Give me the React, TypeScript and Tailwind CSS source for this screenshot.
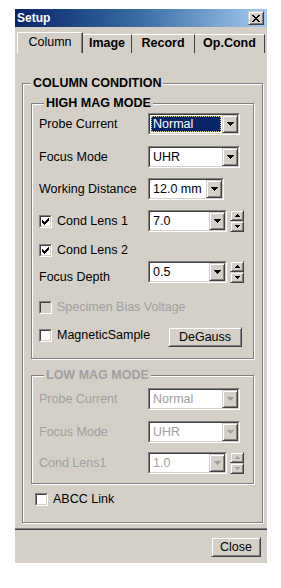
import React from "react";

const CHECK = [
  "......#",
  ".....##",
  "#...###",
  "##.###.",
  "#####..",
  ".###...",
  "..#....",
];

const checkPath = CHECK.flatMap((row, y) =>
  row.split("").map((c, x) => (c === "#" ? `M${x} ${y}h1v1h-1z` : ""))
).join("");

const Check = ({ checked, disabled }: { checked?: boolean; disabled?: boolean }) => (
  <div className="w-[13px] h-[13px] shrink-0 border border-t-[#808080] border-l-[#808080] border-b-white border-r-white">
    <div
      className={`w-full h-full flex items-center justify-center border border-t-[#404040] border-l-[#404040] border-b-[#d4d0c8] border-r-[#d4d0c8] ${
        disabled ? "bg-[#d4d0c8]" : "bg-white"
      }`}
    >
      {checked && (
        <svg width="7" height="7" viewBox="0 0 7 7" shapeRendering="crispEdges">
          <path d={checkPath} fill="#000" />
        </svg>
      )}
    </div>
  </div>
);

const Arrow = ({ up, small, color = "#000" }: { up?: boolean; small?: boolean; color?: string }) => {
  const w = small ? 5 : 7;
  const h = small ? 3 : 4;
  const rows = [];
  for (let i = 0; i < h; i++) {
    const y = up ? h - 1 - i : i;
    rows.push(<rect key={i} x={i} y={y} width={w - 2 * i} height={1} />);
  }
  return (
    <svg width={w} height={h} viewBox={`0 0 ${w} ${h}`} shapeRendering="crispEdges" fill={color}>
      {rows}
    </svg>
  );
};

const raised =
  "border border-t-[#d4d0c8] border-l-[#d4d0c8] border-b-[#404040] border-r-[#404040] shadow-[inset_1px_1px_0_#fff,inset_-1px_-1px_0_#808080] bg-[#d4d0c8]";

const Combo = ({
  value,
  w,
  focused,
  disabled,
}: {
  value: string;
  w: string;
  focused?: boolean;
  disabled?: boolean;
}) => (
  <div className={`${w} h-[22px] shrink-0 border border-t-[#808080] border-l-[#808080] border-b-white border-r-white`}>
    <div className="w-full h-full flex bg-white border border-t-[#404040] border-l-[#404040] border-b-[#d4d0c8] border-r-[#d4d0c8]">
      {focused ? (
        <div className="flex-1 m-[1px] flex items-center bg-[#0a246a] text-white border border-dotted border-[#e0d890] pl-[1px] leading-none">
          {value}
        </div>
      ) : (
        <div className={`flex-1 flex items-center pl-[3px] leading-none ${disabled ? "text-[#a0a0a0]" : ""}`}>
          {value}
        </div>
      )}
      <div className={`w-[16px] h-full flex items-center justify-center ${raised}`}>
        <Arrow color={disabled ? "#a0a0a0" : "#000"} />
      </div>
    </div>
  </div>
);

const Spin = ({ disabled }: { disabled?: boolean }) => (
  <div className="w-[14px] h-[22px] ml-[3px] flex flex-col shrink-0">
    <div className={`h-[11px] flex items-center justify-center ${raised}`}>
      <Arrow up small color={disabled ? "#a0a0a0" : "#000"} />
    </div>
    <div className={`h-[11px] flex items-center justify-center ${raised}`}>
      <Arrow small color={disabled ? "#a0a0a0" : "#000"} />
    </div>
  </div>
);

const groupBox =
  "border border-[#808080] shadow-[inset_1px_1px_0_#fff,1px_1px_0_#fff]";

const Legend = ({ children, ml, disabled }: { children: React.ReactNode; ml: string; disabled?: boolean }) => (
  <div
    className={`-mt-[9px] ${ml} w-fit px-[2px] h-[16px] leading-[16px] bg-[#d4d0c8] font-bold text-[12.5px] ${
      disabled ? "text-[#a0a0a0]" : "text-black"
    }`}
  >
    {children}
  </div>
);

const tabs = [
  { label: "Image", w: "w-[49px]" },
  { label: "Record", w: "w-[63px]" },
  { label: "Op.Cond", w: "w-[70px]" },
];

export default function App() {
  return (
    <div className="w-[281px] h-[588px] bg-white pt-[9px] pl-[15px] font-['Liberation_Sans',Arial,sans-serif] text-[12.5px] text-black">
      <div className="w-[252px] h-[554px] bg-[#d4d0c8] flex flex-col">
        {/* title bar */}
        <div className="h-[18px] flex items-center justify-between bg-linear-to-r from-[#0a246a] via-[#3a6ea5] to-[#a6caf0] pl-[2px] pr-[3px]">
          <span className="text-white font-bold text-[12px] leading-none">Setup</span>
          <div className={`w-[16px] h-[14px] flex items-center justify-center ${raised}`}>
            <svg width="8" height="7" viewBox="0 0 8 7" shapeRendering="crispEdges">
              <path
                d="M0 0h2v1h-2zM6 0h2v1h-2zM1 1h2v1h-2zM5 1h2v1h-2zM2 2h4v1h-4zM3 3h2v1h-2zM2 4h4v1h-4zM1 5h2v1h-2zM5 5h2v1h-2zM0 6h2v1h-2zM6 6h2v1h-2z"
                fill="#000"
              />
            </svg>
          </div>
        </div>

        {/* tabs */}
        <div className="h-[26px] flex items-end pl-[2px]">
          <div className="w-[66px] h-[21px] flex items-center justify-center border-t border-l border-t-white border-l-white border-r border-r-[#404040] shadow-[inset_-1px_0_0_#808080] pb-[1px]">
            Column
          </div>
          {tabs.map((t) => (
            <div
              key={t.label}
              className={`${t.w} h-[19px] flex items-center justify-center font-bold border-t border-t-white border-r border-r-[#404040] pb-[2px]`}
            >
              {t.label}
            </div>
          ))}
        </div>

        {/* panel */}
        <div className="pl-[7px] pr-[4px]">
          <div className={`mt-[30px] w-[241px] ${groupBox} pb-[13px]`}>
            <Legend ml="ml-[8px]">COLUMN CONDITION</Legend>

            {/* high mag */}
            <div className={`mt-[12px] mx-[8px] ${groupBox} pl-[7px] pb-[11px]`}>
              <Legend ml="ml-[5px]">HIGH MAG MODE</Legend>

              <div className="mt-[2px] h-[22px] flex items-center">
                <span className="w-[109px]">Probe Current</span>
                <Combo value="Normal" w="w-[92px]" focused />
              </div>
              <div className="mt-[11px] h-[22px] flex items-center">
                <span className="w-[109px]">Focus Mode</span>
                <Combo value="UHR" w="w-[92px]" />
              </div>
              <div className="mt-[10px] h-[22px] flex items-center">
                <span className="w-[109px]">Working Distance</span>
                <Combo value="12.0 mm" w="w-[76px]" />
              </div>
              <div className="mt-[10px] h-[22px] flex items-center">
                <div className="w-[109px] flex items-center gap-[5px]">
                  <Check checked />
                  <span>Cond Lens 1</span>
                </div>
                <Combo value="7.0" w="w-[79px]" />
                <Spin />
              </div>
              <div className="mt-[8px] h-[20px] flex items-center gap-[5px]">
                <Check checked />
                <span>Cond Lens 2</span>
              </div>
              <div className="mt-[1px] h-[22px] flex items-end">
                <span className="w-[109px] leading-[12px]">Focus Depth</span>
                <Combo value="0.5" w="w-[79px]" />
                <Spin />
              </div>
              <div className="mt-[14px] h-[20px] flex items-center gap-[5px] text-[#a0a0a0]">
                <Check disabled />
                <span>Specimen Bias Voltage</span>
              </div>
              <div className="mt-[10px] h-[20px] flex items-center">
                <div className="w-[129px] flex items-center gap-[5px] -mt-[3px]">
                  <Check />
                  <span>MagneticSample</span>
                </div>
                <div className={`w-[74px] h-[20px] flex items-center justify-center ${raised}`}>DeGauss</div>
              </div>
            </div>

            {/* low mag */}
            <div className={`mt-[16px] mx-[8px] ${groupBox} pl-[7px] pb-[9px] text-[#a0a0a0]`}>
              <Legend ml="ml-[5px]" disabled>
                LOW MAG MODE
              </Legend>
              <div className="mt-[5px] h-[22px] flex items-center">
                <span className="w-[109px]">Probe Current</span>
                <Combo value="Normal" w="w-[92px]" disabled />
              </div>
              <div className="mt-[11px] h-[22px] flex items-center">
                <span className="w-[109px]">Focus Mode</span>
                <Combo value="UHR" w="w-[92px]" disabled />
              </div>
              <div className="mt-[9px] h-[22px] flex items-center">
                <span className="w-[109px]">Cond Lens1</span>
                <Combo value="1.0" w="w-[79px]" disabled />
                <Spin disabled />
              </div>
            </div>

            <div className="mt-[5px] ml-[12px] h-[20px] flex items-center gap-[5px]">
              <Check />
              <span>ABCC Link</span>
            </div>
          </div>
        </div>

        {/* separator */}
        <div className="mt-[5px] h-[2px] border-t border-t-[#808080] border-b border-b-[#404040]" />

        <div className="mt-[7px] flex justify-end pr-[6px]">
          <div className={`w-[50px] h-[20px] flex items-center justify-center ${raised}`}>Close</div>
        </div>
      </div>
    </div>
  );
}
